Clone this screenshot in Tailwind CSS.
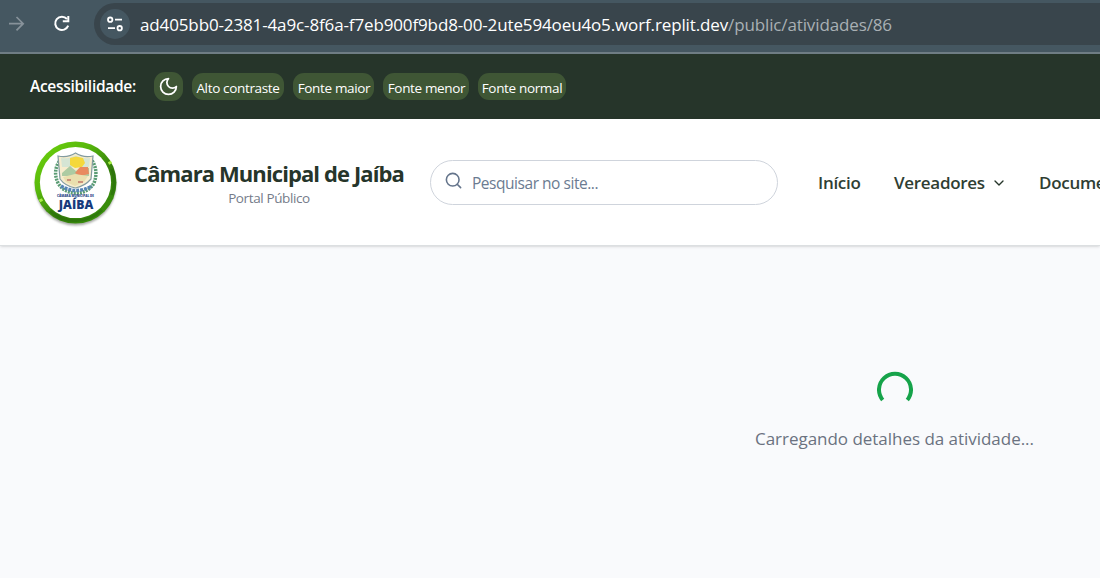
<!DOCTYPE html>
<html lang="pt-BR">
<head>
<meta charset="utf-8">
<title>Câmara Municipal de Jaíba</title>
<script src="https://cdn.jsdelivr.net/npm/@tailwindcss/browser@4"></script>
</head>
<body class="h-[578px] w-[1100px] overflow-hidden bg-[#f9fafb] font-['Open_Sans','Noto_Sans',sans-serif] whitespace-nowrap flex flex-col">
<div class="h-[54px] shrink-0 bg-[#455761] border-b-2 border-[#6f7d84] flex items-start">
  <svg class="ml-[7px] mt-[14px] size-5 shrink-0" viewBox="0 0 20 20" fill="none" stroke="#87929a" stroke-width="1.7"><path d="M2 9.7H16M9.5 3L16.2 9.7L9.5 16.4"/></svg>
  <svg class="ml-[25px] mt-[13px] size-5 shrink-0" viewBox="0 0 20 20" fill="none" stroke="#fff" stroke-width="2"><path d="M16.2 12.7A6.7 6.7 0 1 1 15 6"/><path d="M16.3 3V8.2H10.8" /></svg>
  <div class="ml-[22px] mt-[3px] h-[42px] min-w-0 flex-1 rounded-l-full bg-[#39454c] flex items-center">
    <div class="ml-[6px] size-[30px] rounded-full bg-[#455761] flex items-center justify-center">
      <svg class="size-[18px]" viewBox="0 0 18 18" fill="none" stroke="#fff" stroke-width="1.8"><circle cx="4.2" cy="4.7" r="2.2"/><path d="M9 4.7H16M2 13.2H9"/><circle cx="13.7" cy="13.2" r="2.2"/></svg>
    </div>
    <div class="ml-[10px] pt-px text-[17px] leading-6 tracking-[-0.13px] text-white"><span>ad405bb0-2381-4a9c-8f6a-f7eb900f9bd8-00-2ute594oeu4o5.worf.replit.dev</span><span class="text-[#a9b0b4]">/public/atividades/86</span></div>
  </div>
</div>
<div class="h-[65px] shrink-0 bg-[#26352a] flex items-center text-white pl-[30px]">
  <div class="w-[124px] text-[15.5px] font-semibold tracking-[-0.3px]">Acessibilidade:</div>
  <button class="size-[29px] rounded-[11px] bg-[#3f5635] flex items-center justify-center"><svg class="size-[21px]" viewBox="0 0 24 24" fill="none" stroke="#fff" stroke-width="2" stroke-linecap="round" stroke-linejoin="round"><path d="M12 3a6 6 0 0 0 9 9 9 9 0 1 1-9-9Z"/></svg></button>
  <div class="ml-[9px] flex gap-[9px] text-[13.5px] leading-[18px] tracking-[-0.34px]">
    <button class="h-[27px] w-[92px] rounded-[11px] bg-[#3f5635] pt-[3px] flex items-center justify-center">Alto contraste</button>
    <button class="h-[27px] w-[81px] rounded-[11px] bg-[#3f5635] pt-[3px] pl-px flex items-center justify-center">Fonte maior</button>
    <button class="h-[27px] w-[86px] rounded-[11px] bg-[#3f5635] pt-[3px] pl-px flex items-center justify-center">Fonte menor</button>
    <button class="h-[27px] w-[88px] rounded-[11px] bg-[#3f5635] pt-[3px] flex items-center justify-center">Fonte normal</button>
  </div>
</div>
<header class="h-[127px] shrink-0 bg-white border-b border-[#dcdfe1] shadow-sm z-10 flex items-center">
  <svg class="ml-[32px] mt-[3px] size-[90px] shrink-0" viewBox="0 0 90 90">
    <defs><linearGradient id="ring" x1="0" y1="0" x2=".9" y2="1"><stop offset="0" stop-color="#70d60d"/><stop offset=".35" stop-color="#58b80c"/><stop offset=".65" stop-color="#347d0b"/><stop offset="1" stop-color="#3c970c"/></linearGradient>
    <filter id="soft" x="-20%" y="-20%" width="140%" height="140%"><feGaussianBlur stdDeviation="1"/></filter></defs>
    <circle cx="43.5" cy="46" r="40.5" fill="#a7aaa5" filter="url(#soft)"/>
    <circle cx="43.5" cy="43.5" r="41" fill="url(#ring)"/>
    <path d="M76.5 24.5L79.5 23M7.5 62L10.5 60.5" stroke="#a6ee43" stroke-width="3"/>
    <path d="M80 30A39 39 0 0 1 80 56M70 71A38.5 38.5 0 0 1 18 72" fill="none" stroke="#26670b" stroke-width="3" opacity=".5"/>
    <circle cx="43.5" cy="43.5" r="35.6" fill="#fff"/>
    <path d="M29 20Q20 31 26 44Q32 54 44 54Q56 54 62 44Q67 31 59 20" fill="none" stroke="#5b9c74" stroke-width="3.5" stroke-dasharray="2 1"/>
    <path d="M29 47Q44 56 60 47" fill="none" stroke="#5585b5" stroke-width="3.5" stroke-dasharray="3 1"/>
    <path d="M26 17Q36 19 43.5 14Q51 19 61 17L59 40Q53 47 43.5 49Q33 47 28 40Z" fill="#f6eccd" stroke="#829ba0" stroke-width="1.2"/>
    <path d="M29 19Q37 20 43.5 16.5Q51 20 58 19L57 28H30Z" fill="#d5e5d4"/>
    <path d="M38 19L44 17.5L51 19L53 24L50 28L43 29L38 26Z" fill="#f5d83c"/>
    <path d="M30 34L38 27L44 32L48 29L57 29L57 37H30Z" fill="#adcba2"/>
    <path d="M43 34L48 28L56 28L57 35L48 37Z" fill="#e98a5f"/>
    <path d="M31 38L43 35L56 37L52 43L43 47L34 43Z" fill="#eadfae"/>
    <path d="M35 41H39M46 43H51" stroke="#c2776b" stroke-width="1.6"/>
    <text x="43.5" y="57.6" text-anchor="middle" textLength="37" lengthAdjust="spacingAndGlyphs" font-family="Open Sans, sans-serif" font-size="3.8" font-weight="800" fill="#27458a">CÂMARA MUNICIPAL DE</text>
    <text x="44" y="70" text-anchor="middle" textLength="34.5" lengthAdjust="spacingAndGlyphs" font-family="Open Sans, sans-serif" font-size="11.5" font-weight="800" fill="#173b7d">JAÍBA</text>
  </svg>
  <div class="ml-[12px] w-[270px] shrink-0 flex flex-col items-center pt-[5px]">
    <div class="text-[22px] leading-7 font-bold tracking-[-0.9px] text-[#26352a]">Câmara Municipal de Jaíba</div>
    <div class="text-[13.5px] leading-[23px] tracking-[-0.38px] text-[#747b89]">Portal Público</div>
  </div>
  <div class="ml-[26px] h-[45px] w-[348px] shrink-0 rounded-full border border-[#cfd4dc] bg-white flex items-center pl-[13px]">
    <svg class="size-[19px] mb-[4px]" viewBox="0 0 24 24" fill="none" stroke="#64748b" stroke-width="2" stroke-linecap="round"><circle cx="11" cy="11" r="8"/><path d="m21 21-4.3-4.3"/></svg>
    <span class="ml-[9px] pt-[3px] text-[15.5px] tracking-[-0.46px] text-[#6b7b91]">Pesquisar no site...</span>
  </div>
  <nav class="ml-[40px] min-w-0 flex-1 overflow-hidden flex items-center pt-[2px] text-[17px] font-semibold tracking-[-0.3px] text-[#2f3e33]">
    <span class="w-[76px] shrink-0">Início</span>
    <span class="w-[92px] shrink-0">Vereadores</span>
    <svg class="ml-[5px] mr-[32px] size-4 shrink-0" viewBox="0 0 24 24" fill="none" stroke="#26352a" stroke-width="2" stroke-linecap="round" stroke-linejoin="round"><path d="m6 9 6 6 6-6"/></svg>
    <span>Documentos</span>
  </nav>
</header>
<main class="flex-1 bg-[#f9fafc] flex flex-col items-center pt-[124px] pl-[689px]">
  <svg class="size-9 shrink-0" viewBox="0 0 36 36" fill="none" stroke="#16a34a" stroke-width="4"><path d="M5.7 30A16 16 0 1 1 30.3 30"/></svg>
  <p class="mt-[20px] text-[17px] leading-[26px] tracking-[-0.03px] text-[#6b7280]">Carregando detalhes da atividade...</p>
</main>
</body>
</html>
